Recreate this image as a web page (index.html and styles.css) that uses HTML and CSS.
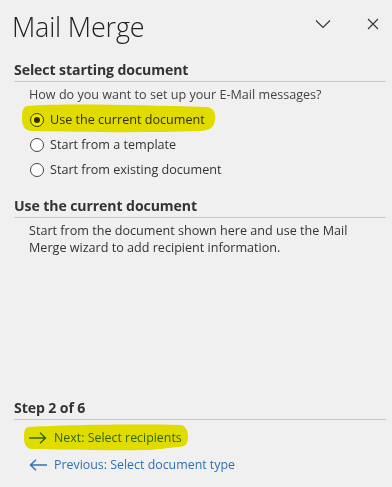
FILE: index.html
```html
<!DOCTYPE html>
<html>
<head>
<meta charset="utf-8">
<link rel="stylesheet" href="styles.css">
</head>
<body>
<div class="pane">
  <header class="head">
    <h1 class="title">Mail Merge</h1>
    <div class="head-btns">
      <svg class="chev" width="16" height="10" viewBox="0 0 16 10"><path d="M1 1.5 L8 8.5 L15 1.5" fill="none" stroke="#333" stroke-width="1.1"/></svg>
      <svg class="close" width="12" height="12" viewBox="0 0 12 12"><path d="M1 1 L11 11 M11 1 L1 11" fill="none" stroke="#333" stroke-width="1.1"/></svg>
    </div>
  </header>

  <section class="sec sec1">
    <h2 class="sec-h">Select starting document</h2>
    <div class="sec-body">
      <p class="q">How do you want to set up your E-Mail messages?</p>
      <div class="opts">
        <label class="opt"><span class="radio checked"></span>Use the current document</label>
        <label class="opt"><span class="radio"></span>Start from a template</label>
        <label class="opt"><span class="radio"></span>Start from existing document</label>
      </div>
    </div>
  </section>

  <section class="sec sec2">
    <h2 class="sec-h">Use the current document</h2>
    <div class="sec-body">
      <p class="desc">Start from the document shown here and use the Mail Merge wizard to add recipient information.</p>
    </div>
  </section>

  <div class="spacer"></div>

  <section class="sec sec3">
    <h2 class="sec-h">Step 2 of 6</h2>
    <div class="links">
      <a class="link"><svg class="arr" width="18" height="12" viewBox="0 0 18 12"><path d="M0 6 H16.5 M11 0.8 L16.5 6 L11 11.2" fill="none" stroke="#2f72b8" stroke-width="1.4"/></svg>Next: Select recipients</a>
      <a class="link"><svg class="arr" width="18" height="12" viewBox="0 0 18 12"><path d="M18 6 H1.5 M7 0.8 L1.5 6 L7 11.2" fill="none" stroke="#2f72b8" stroke-width="1.4"/></svg>Previous: Select document type</a>
    </div>
  </section>
</div>

<svg class="hl hl1" width="196" height="34" viewBox="0 0 196 34"><path d="M6 4 C40 1 120 3 186 5 C193 6 195 12 194 18 C193 25 190 28 180 29 C120 31 60 30 10 29 C3 28 1 24 1 16 C1 9 2 5 6 4 Z" fill="#f0ea00"/></svg>
<svg class="hl hl2" width="166" height="30" viewBox="0 0 166 30"><path d="M5 4 C40 2 110 1 158 2 C163 3 165 8 165 14 C165 21 162 24 155 24 C140 25 136 27 120 27 C80 28 40 26 8 26 C3 25 1 21 1 14 C1 8 2 5 5 4 Z" fill="#f0ea00"/></svg>
</body>
</html>
```

FILE: styles.css
```css
html, body {
  margin: 0;
  padding: 0;
  background: #f0f0f0;
}
body {
  width: 392px;
  height: 487px;
  overflow: hidden;
  position: relative;
  font-family: "Open Sans", "Noto Sans", sans-serif;
  color: #333;
}
.pane {
  height: 487px;
  display: flex;
  flex-direction: column;
}
.head {
  display: flex;
  align-items: center;
  justify-content: space-between;
  height: 52px;
  padding: 0 12px 0 12px;
}
.title {
  margin: 0;
  font-weight: 300;
  font-size: 27px;
  letter-spacing: -0.2px;
  color: #222;
  line-height: 1;
  margin-top: 0px;
}
.head-btns {
  display: flex;
  align-items: center;
  gap: 36px;
  margin-top: -4px;
}
.chev { display: block; }
.close { display: block; margin-right: 1px; }

.sec {
  padding-left: 14px;
  padding-right: 6px;
}
.sec-h {
  margin: 0;
  font-size: 14.1px;
  font-weight: 700;
  color: #333;
  line-height: 18px;
  padding-bottom: 2px;
  border-bottom: 1px solid #c6c6c6;
  letter-spacing: -0.1px;
}
.sec1 { margin-top: 9px; }
.sec-body {
  padding-left: 15px;
  font-size: 12.6px;
  line-height: 17px;
}
.q {
  margin: 4px 0 0 0;
  color: #444;
}
.opts {
  display: flex;
  flex-direction: column;
  gap: 8px;
  margin-top: 8px;
}
.opt {
  display: flex;
  align-items: center;
  gap: 6px;
  color: #333;
  margin-left: 1px;
}
.radio {
  width: 14px;
  height: 14px;
  border: 1px solid #444;
  border-radius: 50%;
  background: #fff;
  box-sizing: border-box;
  display: flex;
  align-items: center;
  justify-content: center;
}
.radio.checked::after {
  content: "";
  width: 6px;
  height: 6px;
  border-radius: 50%;
  background: #333;
}
.sec2 { margin-top: 19px; }
.desc {
  margin: 4px 0 0 0;
  color: #333;
  width: 330px;
}
.spacer { flex: 1; }
.sec3 { margin-bottom: 14px; }
.links {
  display: flex;
  flex-direction: column;
  gap: 10px;
  padding-left: 15px;
  margin-top: 9px;
}
.link {
  display: flex;
  align-items: center;
  gap: 7px;
  color: #2f6fb3;
  font-size: 12.4px;
  line-height: 17px;
}
.arr { display: block; }

.hl {
  position: absolute;
  mix-blend-mode: multiply;
  pointer-events: none;
}
.hl1 { left: 21px; top: 102px; }
.hl2 { left: 23px; top: 423px; }
```
